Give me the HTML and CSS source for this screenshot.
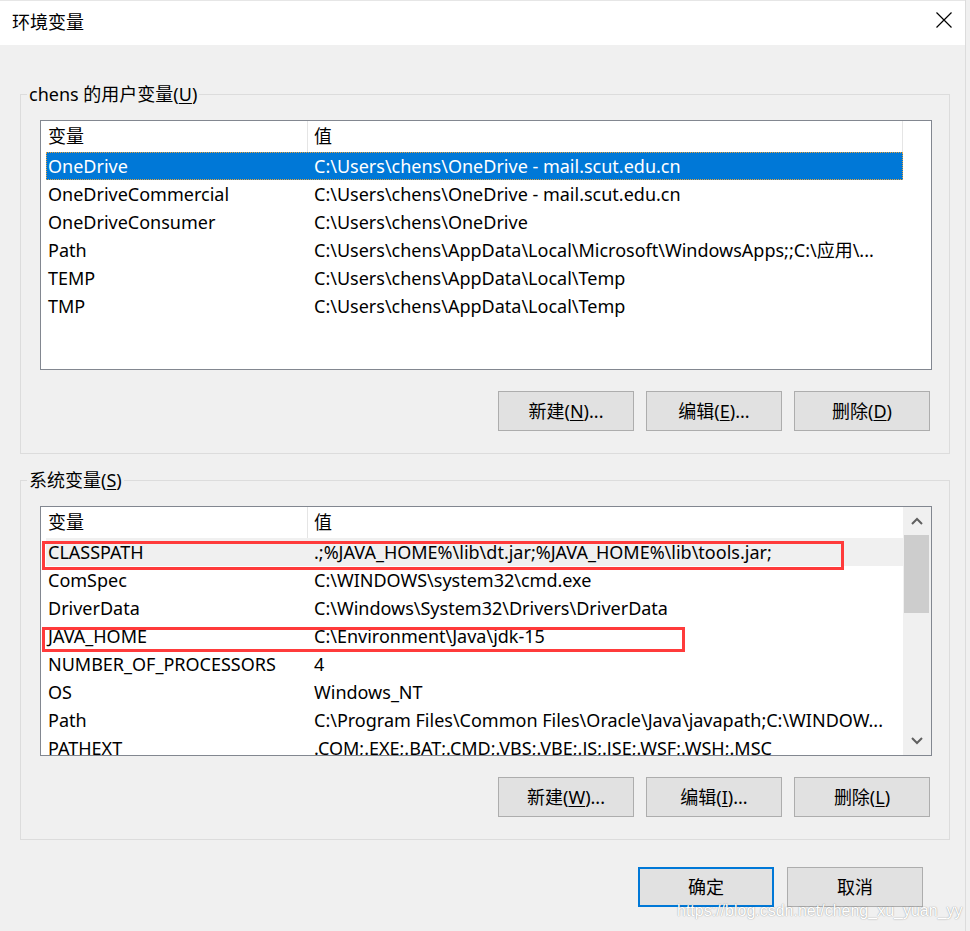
FILE: index.html
```html
<!DOCTYPE html>
<html lang="zh-CN">
<head>
<meta charset="utf-8">
<title>环境变量</title>
<link rel="stylesheet" href="styles.css">
</head>
<body>
<div class="window">
  <div class="titlebar">
    <span class="title">环境变量</span>
    <span class="close">
      <svg width="16" height="16" viewBox="0 0 16 16"><path d="M0.5 0.5 L15.5 15.5 M15.5 0.5 L0.5 15.5" stroke="#000" stroke-width="1.2" fill="none"/></svg>
    </span>
  </div>
  <div class="content">
    <fieldset class="group g1">
      <legend>chens 的用户变量(<u>U</u>)</legend>
      <div class="listbox">
        <div class="listarea">
          <div class="header"><div class="hcell h1">变量</div><div class="hcell h2">值</div></div>
          <div class="rows">
            <div class="row selected"><span class="name">OneDrive</span><span class="val">C:\Users\chens\OneDrive - mail.scut.edu.cn</span></div>
            <div class="row"><span class="name">OneDriveCommercial</span><span class="val">C:\Users\chens\OneDrive - mail.scut.edu.cn</span></div>
            <div class="row"><span class="name">OneDriveConsumer</span><span class="val">C:\Users\chens\OneDrive</span></div>
            <div class="row"><span class="name">Path</span><span class="val">C:\Users\chens\AppData\Local\Microsoft\WindowsApps;;C:\应用\...</span></div>
            <div class="row"><span class="name">TEMP</span><span class="val">C:\Users\chens\AppData\Local\Temp</span></div>
            <div class="row"><span class="name">TMP</span><span class="val">C:\Users\chens\AppData\Local\Temp</span></div>
          </div>
        </div>
      </div>
      <div class="buttons">
        <button class="btn">新建(<u>N</u>)...</button>
        <button class="btn">编辑(<u>E</u>)...</button>
        <button class="btn">删除(<u>D</u>)</button>
      </div>
    </fieldset>

    <fieldset class="group g2">
      <legend>系统变量(<u>S</u>)</legend>
      <div class="listbox">
        <div class="listarea">
          <div class="header"><div class="hcell h1">变量</div><div class="hcell h2 noline">值</div></div>
          <div class="rows">
            <div class="row hover"><span class="name">CLASSPATH</span><span class="val">.;%JAVA_HOME%\lib\dt.jar;%JAVA_HOME%\lib\tools.jar;</span></div>
            <div class="row"><span class="name">ComSpec</span><span class="val">C:\WINDOWS\system32\cmd.exe</span></div>
            <div class="row"><span class="name">DriverData</span><span class="val">C:\Windows\System32\Drivers\DriverData</span></div>
            <div class="row"><span class="name">JAVA_HOME</span><span class="val">C:\Environment\Java\jdk-15</span></div>
            <div class="row"><span class="name">NUMBER_OF_PROCESSORS</span><span class="val">4</span></div>
            <div class="row"><span class="name">OS</span><span class="val">Windows_NT</span></div>
            <div class="row"><span class="name">Path</span><span class="val">C:\Program Files\Common Files\Oracle\Java\javapath;C:\WINDOW...</span></div>
            <div class="row"><span class="name">PATHEXT</span><span class="val">.COM;.EXE;.BAT;.CMD;.VBS;.VBE;.JS;.JSE;.WSF;.WSH;.MSC</span></div>
          </div>
        </div>
        <div class="scrollbar">
          <span class="arrow">
            <svg width="12" height="8" viewBox="0 0 12 8"><path d="M1 7 L6 2 L11 7" stroke="#606060" stroke-width="2" fill="none"/></svg>
          </span>
          <div class="track"><div class="thumb"></div></div>
          <span class="arrow">
            <svg width="12" height="8" viewBox="0 0 12 8"><path d="M1 1 L6 6 L11 1" stroke="#606060" stroke-width="2" fill="none"/></svg>
          </span>
        </div>
        <div class="mark mark-classpath"></div>
        <div class="mark mark-javahome"></div>
      </div>
      <div class="buttons">
        <button class="btn">新建(<u>W</u>)...</button>
        <button class="btn">编辑(<u>I</u>)...</button>
        <button class="btn">删除(<u>L</u>)</button>
      </div>
    </fieldset>

    <div class="dialog-buttons">
      <button class="btn default">确定</button>
      <button class="btn">取消</button>
    </div>
  </div>
  <div class="watermark">https://blog.csdn.net/cheng_xu_yuan_yy</div>
</div>
</body>
</html>
```

FILE: styles.css
```css
* { box-sizing: border-box; }
html, body { margin: 0; padding: 0; }
body {
  width: 970px;
  height: 931px;
  background: #f0f0f0;
  overflow: hidden;
  font-family: "Noto Sans", "Noto Sans CJK SC", sans-serif;
  font-size: 18px;
  color: #000;
}
.window {
  position: relative;
  width: 966px;
  height: 931px;
  background: #f0f0f0;
  border-right: 1px solid #dcdcdc;
}
.titlebar {
  height: 45px;
  background: #fff;
  display: flex;
  align-items: center;
  justify-content: space-between;
  padding: 0 13px 0 12px;
  border-top: 1px solid #e6e6e6;
}
.title { font-size: 18px; line-height: 24px; margin-top: -3px; }
.close { display: flex; width: 16px; height: 16px; margin-top: -7px; }

.content { padding: 37px 0 0 20px; }

.group {
  width: 930px;
  margin: 0;
  border: 1px solid #dcdcdc;
  padding: 14px 17px 22px 19px;
  min-width: 0;
}
.g2 { margin-top: 14px; }
legend {
  padding: 0 2px;
  margin-left: -13px;
  line-height: 24px;
  font-size: 18px;
}
u { text-decoration: underline; text-underline-offset: 2px; text-decoration-thickness: 1px; }

.listbox {
  position: relative;
  width: 892px;
  height: 250px;
  border: 1px solid #828790;
  background: #fff;
  display: flex;
  overflow: hidden;
}
.listarea { width: 862px; height: 248px; overflow: hidden; }
.header { display: flex; height: 31px; }
.hcell {
  line-height: 30px;
  padding-left: 7px;
  white-space: nowrap;
}
.h1 { width: 267px; border-right: 1px solid #e5e5e5; }
.h2 { width: 595px; padding-left: 6px; border-right: 1px solid #e5e5e5; }
.h2.noline { border-right: none; }
.rows { padding-left: 5px; }
.row {
  display: flex;
  height: 28px;
  line-height: 28px;
  white-space: nowrap;
}
.row .name { width: 261px; padding-left: 2px; overflow: hidden; }
.row .val { flex: 1; padding-left: 7px; overflow: hidden; }
.row.selected {
  background: #0078d7;
  color: #fff;
  outline: 1px dotted #e8a33c;
  outline-offset: -1px;
}
.row.hover { background: #f0f0f0; }

.scrollbar {
  width: 28px;
  height: 248px;
  background: #f0f0f0;
  display: flex;
  flex-direction: column;
  align-items: center;
}
.arrow {
  height: 28px;
  width: 100%;
  display: flex;
  align-items: center;
  justify-content: center;
}
.track { flex: 1; width: 100%; padding: 0 2px 0 1px; }
.thumb { height: 78px; background: #cdcdcd; }

.mark {
  position: absolute;
  border: 3px solid #ff3b3b;
  pointer-events: none;
}
.mark-classpath { left: 1px; top: 34px; width: 802px; height: 29px; }
.mark-javahome { left: 1px; top: 120px; width: 643px; height: 25px; }

.buttons {
  display: flex;
  justify-content: flex-end;
  gap: 12px;
  margin-top: 21px;
  padding-right: 2px;
}
.btn {
  width: 136px;
  height: 40px;
  background: #e1e1e1;
  border: 1px solid #adadad;
  font-family: "Noto Sans", "Noto Sans CJK SC", sans-serif;
  font-size: 18px;
  color: #000;
  padding: 0;
  line-height: 24px;
}
.btn.default { border: 2px solid #0078d7; }

.dialog-buttons {
  display: flex;
  justify-content: flex-end;
  gap: 13px;
  width: 930px;
  padding-right: 27px;
  margin-top: 27px;
}

.watermark {
  position: absolute;
  left: 677px;
  top: 902px;
  font-family: "Liberation Sans", sans-serif;
  font-size: 16px;
  color: #ffffff;
  text-shadow: 0 0 1px rgba(0, 0, 0, 0.35), 0 0 2px rgba(0, 0, 0, 0.15);
  white-space: nowrap;
}
```
